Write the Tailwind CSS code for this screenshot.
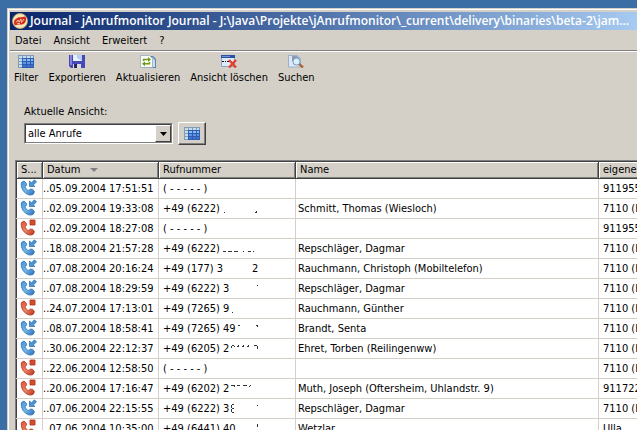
<!DOCTYPE html>
<html lang="de">
<head>
  <meta charset="UTF-8">
  <meta name="viewport" content="width=device-width, initial-scale=1.0">
  <title>Journal - jAnrufmonitor</title>
  <script src="https://cdn.jsdelivr.net/npm/@tailwindcss/browser@4"></script>
</head>
<body class="h-screen overflow-hidden bg-[#3a6ea5] pl-[7px] pt-2 font-['DejaVu_Sans_Condensed','DejaVu_Sans',sans-serif] text-[11px] leading-4 text-black">
  <!-- shared icons -->
  <svg class="absolute size-0">
    <defs>
      <linearGradient id="blue" x1="0" y1="0" x2="1" y2="1">
        <stop offset="0" stop-color="#3f92dc"/><stop offset=".5" stop-color="#74b8ee"/><stop offset="1" stop-color="#2468ae"/>
      </linearGradient>
      <linearGradient id="red" x1="0" y1="0" x2="1" y2="1">
        <stop offset="0" stop-color="#e0492c"/><stop offset=".5" stop-color="#f08468"/><stop offset="1" stop-color="#b02c14"/>
      </linearGradient>
      <symbol id="handset" viewBox="0 0 18 17">
        <path d="M1.500 3.500 4 2l2.500 2.500-.2 2-1.300 1c.3 2 1.800 3.500 3.800 4l1.300-1.400 2.400.1 2 2.500-1.300 2.600c-2 1.400-5.500.8-8-1.500C2.200 11.500.7 7 1.500 3.500z" stroke-width=".8"/>
      </symbol>
      <symbol id="grid" viewBox="0 0 16 13">
        <path fill="#7f9cb8" d="M0 0h16v13H0z"/>
        <path fill="#c4dcec" d="M1 1h3v2H1zM5 1h3v2H5zM9 1h3v2H9zM13 1h2v2h-2zM1 4h3v2H1zM1 7h3v2H1zM1 10h3v2H1z"/>
        <path fill="#2f5cae" d="M4 3h12v10H4z"/>
        <path fill="#86bdf4" d="M5 4h3v2H5zM9 4h3v2H9zM13 4h2v2h-2z"/>
        <path fill="#5d94e8" d="M5 7h3v2H5zM9 7h3v2H9zM13 7h2v2h-2z"/>
        <path fill="#4272d4" d="M5 10h3v2H5zM9 10h3v2H9zM13 10h2v2h-2z"/>
      </symbol>
    </defs>
  </svg>

  <div class="flex h-full flex-col border-l border-t border-[#d4d0c8] bg-[#d4d0c8]">
    <div class="flex grow flex-col border-l border-t border-white pl-px pt-[2px]">
      <header class="flex h-[18px] shrink-0 items-center gap-[2px] overflow-hidden bg-linear-to-r from-[#0a246a] to-[#a6caf0] pl-[2px] text-white">
        <svg class="size-4 shrink-0" viewBox="0 0 16 16">
          <circle cx="8" cy="8" r="7.500" fill="#f6e6b4" stroke="#c9a86a" stroke-width=".8"/>
          <path fill="#d42a20" d="M2 9.500C2 6 6 4 9 4.300l4-.8c1.500 1 1.300 3 .7 4.500C13 11 10 12 7 11.500l-3.500.8C2.500 12 2 11 2 9.500z"/>
          <path fill="none" stroke="#fbd9b0" stroke-width=".9" d="M4 9.500 6 7l1 2 2-3 .5 3.500L12 6M5 11l3-1"/>
        </svg>
        <h1 class="whitespace-nowrap font-['Open_Sans','Noto_Sans',sans-serif] text-[12px] font-semibold">Journal - jAnrufmonitor Journal - J:\Java\Projekte\jAnrufmonitor\_current\delivery\binaries\beta-2\jam...</h1>
      </header>

      <nav class="flex h-5 shrink-0 items-center gap-3 pl-[5px] pt-px">
        <button>Datei</button>
        <button>Ansicht</button>
        <button>Erweitert</button>
        <button>?</button>
      </nav>

      <div class="flex shrink-0 gap-[10px] border-t border-[#808080] pl-1 shadow-[inset_0_1px_#fff]">
        <button class="flex flex-col items-center gap-[2px] pt-1">
          <svg class="h-[13px] w-4"><use href="#grid"/></svg>
          Filter
        </button>
        <button class="flex flex-col items-center gap-[2px] pt-1">
          <svg class="h-[13px] w-4" viewBox="0 0 16 13">
            <path fill="#4747b8" d="M0 0h16v13H2l-2-2z"/>
            <path fill="#7d85e0" d="M1 0h2v10H1z"/>
            <path fill="#e8f0fc" d="M4 0h9v6H4z"/>
            <path fill="#b4cdf2" d="M8 0h5v6L8 3z"/>
            <path fill="#d8d8e4" d="M4 9h8v4H4z"/>
            <path fill="#26264e" d="M5 9h3v4H5z"/>
          </svg>
          Exportieren
        </button>
        <button class="flex flex-col items-center gap-[2px] pt-1">
          <svg class="h-[13px] w-4" viewBox="0 0 16 13">
            <path fill="#5f86a8" d="M4 1h9l3 3v9H4z"/>
            <path fill="#c5def0" d="M12 2l3 3v7h-3z"/>
            <path fill="#fafcf4" stroke="#93abc0" stroke-width=".8" d="M.5.5h9l3 3v9H.5z"/>
            <path fill="none" stroke="#6f9a1c" stroke-width="1.400" d="M3.500 6V4.500H9M9.500 7v1.800H4"/>
            <path fill="#6f9a1c" d="M8 2l3 2.500L8 7zM5 6.300v5L2 8.800z"/>
          </svg>
          Aktualisieren
        </button>
        <button class="flex flex-col items-center gap-[2px] pt-1">
          <svg class="h-[13px] w-4" viewBox="0 0 16 13">
            <path fill="#dfeaf8" stroke="#8ba4c8" d="M.5.5h13v11H.5z"/>
            <path fill="#2c4fa8" d="M0 0h14v3H0z"/>
            <path fill="#6f90d8" d="M1 1h8v1H1z"/>
            <path fill="#111" d="M1 6h2v1H1zM4 6h1v1H4zM6 6h2v1H6zM9 6h1v1H9z"/>
            <path stroke="#e5402a" stroke-width="2.400" d="m8 5 7 7.500M15 5l-7 7.500"/>
          </svg>
          Ansicht löschen
        </button>
        <button class="flex flex-col items-center gap-[2px] pt-1">
          <svg class="h-[13px] w-4" viewBox="0 0 16 13">
            <path fill="#dce8f6" stroke="#8fa4c0" stroke-width=".8" d="M.5.5h9l3 3v8.500H.5z"/>
            <path fill="#8f98b8" d="M4 1h5l3 3v2H4z"/>
            <path stroke="#a8683c" stroke-width="2.400" d="m11 9 4 3.500"/>
            <circle cx="8.500" cy="6.500" r="3.600" fill="#d8f0fc" stroke="#7898b8"/>
          </svg>
          Suchen
        </button>
      </div>

      <main class="flex min-h-0 grow flex-col pl-[5px] pt-[18px]">
        <div class="shrink-0 pl-[9px]">
          <label for="ansicht" class="block">Aktuelle Ansicht:</label>
          <div class="mt-[2px] flex items-center gap-[5px]">
            <div class="relative h-[21px] w-[149px] border border-b-white border-l-[#808080] border-r-white border-t-[#808080]">
              <select id="ansicht" class="block size-full appearance-none border border-b-[#808080] border-l-[#404040] border-r-[#808080] border-t-[#404040] bg-white pl-[2px]">
                <option>alle Anrufe</option>
              </select>
              <span class="pointer-events-none absolute bottom-px right-px top-px flex w-4 items-center justify-center border border-b-[#404040] border-l-white border-r-[#404040] border-t-white bg-[#d4d0c8]">
                <svg class="h-1 w-[7px]" viewBox="0 0 7 4"><path d="M0 0h7L3.500 4z"/></svg>
              </span>
            </div>
            <button aria-label="Filter" class="flex h-[23px] w-7 items-center justify-center border border-b-[#404040] border-l-white border-r-[#404040] border-t-white shadow-[inset_-1px_-1px_#808080]">
              <svg class="h-[13px] w-4"><use href="#grid"/></svg>
            </button>
          </div>
        </div>

        <div class="mt-[15px] min-h-0 grow overflow-hidden border-l border-t border-[#808080]">
          <!-- the last column runs on past the window's edge -->
          <table class="w-[calc(100%+40px)] table-fixed border-l border-t border-[#404040] bg-white">
            <colgroup>
              <col class="w-[26px]"><col class="w-[116px]"><col class="w-[137px]"><col class="w-[303px]"><col>
            </colgroup>
            <thead>
              <tr class="h-[17px] bg-[#d4d0c8] text-left whitespace-nowrap *:overflow-hidden *:border-b *:border-r *:border-[#404040] *:p-0 *:pl-1 *:font-normal *:shadow-[inset_1px_1px_#fff,inset_-1px_-1px_#808080]">
                <th>S...</th>
                <th>Datum
                  <svg class="ml-[6px] inline h-1 w-2" viewBox="0 0 8 4"><path fill="#808080" d="M0 0h8L4 4z"/></svg>
                </th>
                <th>Rufnummer</th>
                <th>Name</th>
                <th>eigene</th>
              </tr>
            </thead>
            <tbody id="calls"></tbody>
          </table>
        </div>
      </main>
    </div>
  </div>

  <script>
    // type, date, number, name, own number, leftovers of the blanked digits
    const calls = [
      ['in', '05.09.2004 17:51:51', '( - - - - - )', '', '911955'],
      ['in', '02.09.2004 19:33:08', '+49 (6222)', 'Schmitt, Thomas (Wiesloch)', '7110 (H', 'M97 12h1v1h-1zM96 13h2v1h-2zM65 13h1v1h-1z'],
      ['out', '02.09.2004 18:27:08', '( - - - - - )', '', '911955'],
      ['in', '18.08.2004 21:57:28', '+49 (6222)', 'Repschläger, Dagmar', '7110 (H', 'M64 12h3v1h-3zM69 12h4v1h-4zM75 12h4v1h-4zM84 12h1v1h-1zM89 12h3v1h-3zM94 12h1v1h-1z'],
      ['in', '07.08.2004 20:16:24', '+49 (177) 3', 'Rauchmann, Christoph (Mobiltelefon)', '7110 (H', '', '2'],
      ['in', '07.08.2004 18:29:59', '+49 (6222) 3', 'Repschläger, Dagmar', '7110 (H', 'M98 6h1v1h-1z'],
      ['out', '24.07.2004 17:13:01', '+49 (7265) 9', 'Rauchmann, Günther', '7110 (H', 'M73 13h1v1h-1z'],
      ['in', '08.07.2004 18:58:41', '+49 (7265) 49', 'Brandt, Senta', '7110 (H', 'M79 6h2v1h-2zM97 6h2v1h-2zM98 7h1v1h-1z'],
      ['in', '30.06.2004 22:12:37', '+49 (6205) 2', 'Ehret, Torben (Reilingenww)', '7110 (H', 'M73 6h2v1h-2zM72 7h1v2h-1zM75 7h1v1h-1zM79 6h1v2h-1zM78 7h1v1h-1zM84 6h1v2h-1zM83 7h1v1h-1zM89 6h1v2h-1zM88 7h1v1h-1zM95 6h3v1h-3zM98 7h1v3h-1z'],
      ['out', '22.06.2004 12:58:50', '( - - - - - )', '', '7110 (H'],
      ['out', '20.06.2004 17:16:47', '+49 (6202) 2', 'Muth, Joseph (Oftersheim, Uhlandstr. 9)', '911722', 'M72 6h4v1h-4zM75 7h1v1h-1zM78 6h3v1h-3zM84 6h4v1h-4zM91 6h1v1h-1zM90 7h1v1h-1z'],
      ['in', '07.06.2004 22:15:55', '+49 (6222) 3', 'Repschläger, Dagmar', '7110 (H', 'M73 5h2v1h-2zM72 6h1v3h-1zM73 9h2v1h-2zM72 10h1v3h-1zM73 13h2v1h-2zM98 6h1v1h-1z'],
      ['out', '07.06.2004 10:35:00', '+49 (6441) 40', 'Wetzlar', 'Ulla', 'M98 5h1v3h-1z'],
    ];

    const icons = {
      in: `<svg class="h-[17px] w-[18px]" viewBox="0 0 18 17">
        <use href="#handset" fill="url(#blue)" stroke="#2c6cac"/>
        <path fill="#4a94d4" stroke="#2668a4" stroke-width=".7" d="M9.500 2v5.500H15l-1.800-1.700L16.500 3 14.500.8l-3 3z"/>
      </svg>`,
      out: `<svg class="h-[17px] w-[18px]" viewBox="0 0 18 17">
        <use href="#handset" fill="url(#red)" stroke="#a83420"/>
        <path fill="#dc4a2c" stroke="#a83420" stroke-width=".8" d="M10 1h5v5h-5z"/>
      </svg>`,
    };

    document.getElementById('calls').innerHTML = calls.map(([type, date, number, name, own, marks, tail]) => `
      <tr class="h-5 whitespace-nowrap *:overflow-hidden *:border-b *:border-[#d4d0c8] *:p-0 *:pt-px">
        <td class="pl-[3px]! pt-0!"><div class="h-[19px]">${icons[type]}</div></td>
        <td class="border-l">..${date}</td>
        <td class="relative border-l pl-1!">${number}
          ${marks ? `<svg class="absolute left-0 top-0 h-[19px] w-[136px]" viewBox="0 0 136 19"><path fill="#333" d="${marks}"/></svg>` : ''}
          ${tail ? `<span class="absolute left-[93px]">${tail}</span>` : ''}
        </td>
        <td class="border-l pl-[2px]!">${name}</td>
        <td class="border-l pl-1!">${own}</td>
      </tr>`).join('');
  </script>
</body>
</html>
